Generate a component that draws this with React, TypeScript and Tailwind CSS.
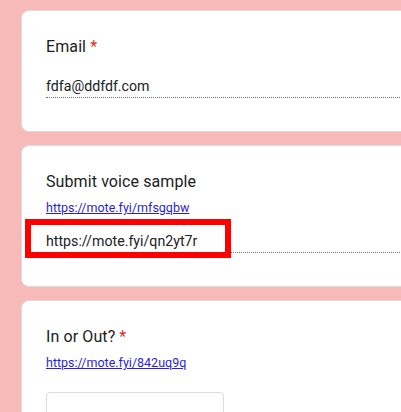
import React from "react";

type Question = {
  title: string;
  required?: boolean;
  link?: string;
};

function Title({ title, required }: Question) {
  return (
    <div className="text-[16px] leading-6 text-[#202124] tracking-[0.1px]">
      {title}
      {required && <span className="text-[#d93025]"> *</span>}
    </div>
  );
}

function LinkLine({ href }: { href: string }) {
  return (
    <a href={href} className="block mt-[6px] text-[12.5px] leading-4 text-[#2a1fd9] underline">
      {href}
    </a>
  );
}

function Card({ children, className }: { children: React.ReactNode; className?: string }) {
  return (
    <section className={`shrink-0 bg-white border border-[#dadce0] rounded-lg pl-6 pt-6 w-[420px] ${className ?? ""}`}>
      {children}
    </section>
  );
}

export default function App() {
  return (
    <div
      className="w-[401px] h-[412px] overflow-hidden bg-[#f8b9b9] pl-[21px] pt-[10px] flex flex-col gap-[13px]"
      style={{ fontFamily: "Roboto, 'Noto Sans', Arial, sans-serif" }}
    >
      {/* email */}
      <Card className="h-[122px]">
        <Title title="Email" required />
        <div className="mt-[17px] text-[14.2px] leading-5 text-[#202124] border-b border-dotted border-[#70757a] pb-[1px]">
          fdfa@ddfdf.com
        </div>
      </Card>

      {/* voice sample */}
      <Card className="h-[142px]">
        <Title title="Submit voice sample" />
        <LinkLine href="https://mote.fyi/mfsgqbw" />
        <div className="relative mt-[15px]">
          <div className="text-[14.2px] leading-5 text-[#202124] border-b border-dotted border-[#70757a] pb-[1px]">
            https://mote.fyi/qn2yt7r
          </div>
          {/* red highlight box */}
          <div className="absolute left-[-21px] top-[-12px] w-[206px] h-[39px] border-[6px] border-[#ff0000]" />
        </div>
      </Card>

      {/* in or out */}
      <Card className="h-[140px]">
        <Title title="In or Out?" required />
        <LinkLine href="https://mote.fyi/842uq9q" />
        <div className="mt-[21px] w-[178px] h-[40px] border border-[#dadce0] rounded" />
      </Card>
    </div>
  );
}
